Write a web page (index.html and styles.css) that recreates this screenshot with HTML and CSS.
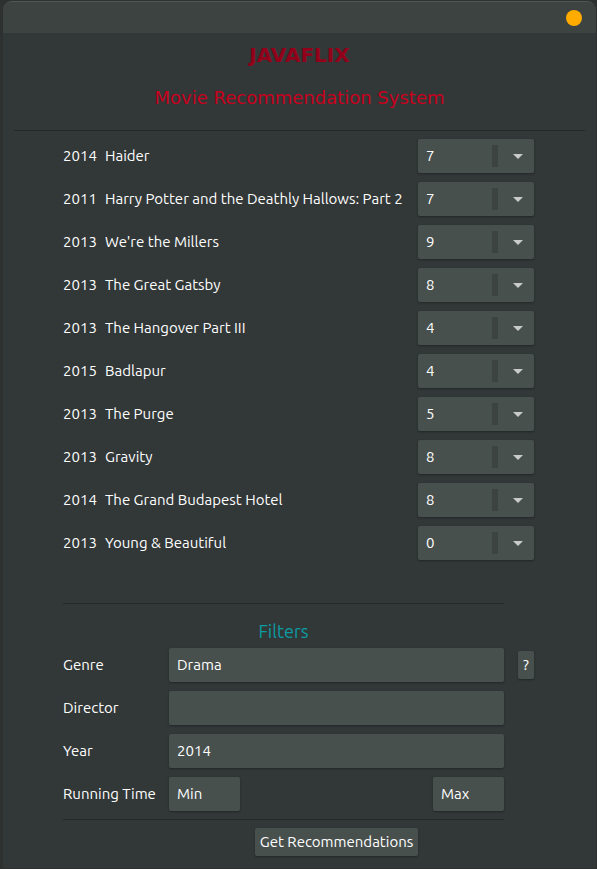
FILE: index.html
```html
<!DOCTYPE html>
<html lang="en">
<head>
<meta charset="utf-8">
<title>Javaflix</title>
<link rel="stylesheet" href="styles.css">
</head>
<body>
<div class="window">
  <header class="titlebar"><button class="close" type="button" aria-label="Close"></button></header>
  <main>
    <div class="heading">
      <h1>JAVAFLIX</h1>
      <p>Movie Recommendation System</p>
    </div>
    <form class="content">
      <div class="movies">
        <div class="movie"><span>2014</span><label for="m1">Haider</label><div class="rating"><select id="m1"><option>7</option></select></div></div>
        <div class="movie"><span>2011</span><label for="m2">Harry Potter and the Deathly Hallows: Part 2</label><div class="rating"><select id="m2"><option>7</option></select></div></div>
        <div class="movie"><span>2013</span><label for="m3">We're the Millers</label><div class="rating"><select id="m3"><option>9</option></select></div></div>
        <div class="movie"><span>2013</span><label for="m4">The Great Gatsby</label><div class="rating"><select id="m4"><option>8</option></select></div></div>
        <div class="movie"><span>2013</span><label for="m5">The Hangover Part III</label><div class="rating"><select id="m5"><option>4</option></select></div></div>
        <div class="movie"><span>2015</span><label for="m6">Badlapur</label><div class="rating"><select id="m6"><option>4</option></select></div></div>
        <div class="movie"><span>2013</span><label for="m7">The Purge</label><div class="rating"><select id="m7"><option>5</option></select></div></div>
        <div class="movie"><span>2013</span><label for="m8">Gravity</label><div class="rating"><select id="m8"><option>8</option></select></div></div>
        <div class="movie"><span>2014</span><label for="m9">The Grand Budapest Hotel</label><div class="rating"><select id="m9"><option>8</option></select></div></div>
        <div class="movie"><span>2013</span><label for="m10">Young &amp; Beautiful</label><div class="rating"><select id="m10"><option>0</option></select></div></div>
      </div>
      <div class="filters">
        <h2>Filters</h2>
        <label for="genre">Genre</label>
        <input id="genre" type="text" value="Drama">
        <button class="help" type="button">?</button>
        <label for="director">Director</label>
        <input id="director" type="text">
        <label for="year">Year</label>
        <input id="year" type="text" value="2014">
        <label for="min">Running Time</label>
        <div class="range">
          <input id="min" type="text" value="Min">
          <input type="text" value="Max" aria-label="Maximum running time">
        </div>
        <div class="actions"><button type="submit">Get Recommendations</button></div>
      </div>
    </form>
  </main>
</div>
</body>
</html>
```
FILE: styles.css
```css
* { box-sizing: border-box; }

body {
  margin: 0;
  padding: 1px 1px 1px 3px;
  background: #2d3231;
  color: #fff;
  font: 15px/20px "Ubuntu", "Noto Sans", sans-serif;
}

.window {
  min-height: calc(100vh - 2px);
  background: #323737;
  border-radius: 9px 9px 0 0;
}

.titlebar {
  display: flex;
  justify-content: flex-end;
  align-items: center;
  height: 32px;
  padding-right: 14px;
  border-top: 1px solid #505655;
  border-radius: 9px 9px 0 0;
  background: #3c4341;
}

.titlebar .close {
  width: 16px;
  height: 16px;
  padding: 0;
  border-radius: 50%;
  background: #ffab00;
  box-shadow: none;
}

.heading {
  margin: 0 11px;
  padding: 8px 0 18px;
  border-bottom: 1px solid #242828;
  color: #c8001e;
  font-family: "DejaVu Sans", sans-serif;
  text-align: center;
}

h1 {
  margin: 0 0 15px;
  color: #93001a;
  font-size: 20px;
  line-height: 28px;
}

.heading p {
  margin: 0;
  font-size: 18px;
  line-height: 28px;
}

.content { margin: 8px 62px 0 60px; }

.movies { display: grid; gap: 9px; }

.movie {
  display: grid;
  grid-template-columns: 34px 1fr 116px;
  column-gap: 8px;
  align-items: center;
}

.movie label { white-space: nowrap; }

input,
select,
button {
  border: 0;
  border-radius: 2px;
  background: #48504e;
  box-shadow: 0 1px 2px #222727;
  color: #fff;
  font: inherit;
}

input,
select {
  width: 100%;
  height: 34px;
  padding: 0 8px;
  appearance: none;
}

input { padding-bottom: 2px; }

.rating { position: relative; }

.rating select { display: block; }

.rating::before,
.rating::after {
  content: "";
  position: absolute;
  pointer-events: none;
}

.rating::before {
  top: 6px;
  right: 36px;
  width: 6px;
  height: 22px;
  background: #3c4341;
}

.rating::after {
  top: 15px;
  right: 11px;
  border: 5px solid transparent;
  border-top-color: #c8cbca;
  border-bottom: 0;
}

.filters {
  display: grid;
  grid-template-columns: 106px 1fr 14px 16px;
  row-gap: 9px;
  align-items: center;
  margin-top: 43px;
}

.filters > label { grid-column: 1; }

.filters > input,
.range { grid-column: 2; }

h2 {
  grid-column: 1 / 3;
  margin: 0 0 -6px;
  padding-top: 14px;
  border-top: 1px solid #242828;
  color: #0b9ca3;
  font-size: 18px;
  font-weight: 400;
  line-height: 27px;
  text-align: center;
}

.help {
  grid-column: 4;
  height: 28px;
  padding: 0;
}

.range {
  display: flex;
  justify-content: space-between;
}

.range input { width: 71px; }

.actions {
  grid-column: 1 / 3;
  margin-top: -1px;
  padding: 8px 0 12px 106px;
  border-top: 1px solid #242828;
  text-align: center;
}

.actions button {
  height: 28px;
  padding: 0 5px;
}
```
